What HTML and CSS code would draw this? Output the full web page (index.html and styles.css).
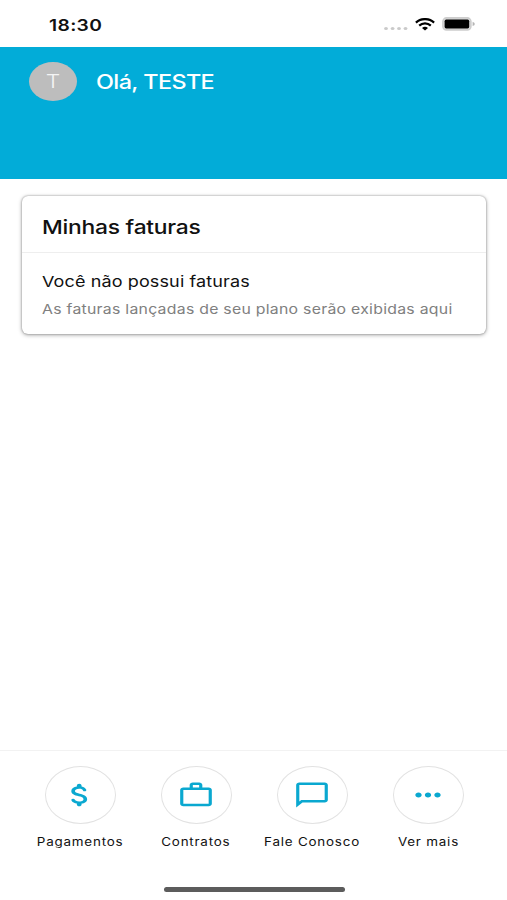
FILE: index.html
```html
<!DOCTYPE html>
<html lang="pt-BR">
<head>

	<meta charset="utf-8">
	<meta name="viewport" content="width=device-width, initial-scale=1">

	<title>Minhas faturas</title>

	<link rel="stylesheet" href="styles.css">

</head>
<body>

	<div class="status">
		<span class="t time">18:30</span>
		<div class="signals">
			<svg class="cell" width="24" height="5" viewBox="0 0 24 5" fill="#cacaca">
				<ellipse cx="2" cy="2.5" rx="1.9" ry="1.6"/>
				<ellipse cx="8.6" cy="2.5" rx="1.9" ry="1.6"/>
				<ellipse cx="15" cy="2.5" rx="1.9" ry="1.6"/>
				<ellipse cx="21.5" cy="2.5" rx="1.9" ry="1.6"/>
			</svg>
			<svg class="wifi" width="20" height="13" viewBox="0 0 20 13" fill="none" stroke="#000" stroke-width="2.2">
				<path d="M.9 4.6C6-.1 14-.1 19.1 4.6"/>
				<path d="M4.2 7.6C7.5 4.6 12.5 4.6 15.8 7.6"/>
				<path d="M7 9.9Q10 7.6 13 9.9L10 12.6z" fill="#000" stroke="none"/>
			</svg>
			<svg class="battery" width="33" height="14" viewBox="0 0 33 14">
				<rect x=".9" y=".9" width="28" height="12" rx="3.6" fill="#ddd" stroke="#cdcdcd" stroke-width="1.6"/>
				<rect x="2.6" y="2.6" width="24.6" height="8.8" rx="1.6" fill="#000"/>
				<path d="M30.6 4.7q2.2 1 2.2 2.2t-2.2 2.2z" fill="#b5b5b5"/>
			</svg>
		</div>
	</div>

	<header class="top">
		<div class="avatar"><span class="t">T</span></div>
		<span class="t hello">Olá, TESTE</span>
	</header>

	<main>
		<section class="card">
			<h2><span class="t">Minhas faturas</span></h2>
			<div class="content">
				<p class="empty"><span class="t">Você não possui faturas</span></p>
				<p class="hint"><span class="t">As faturas lançadas de seu plano serão exibidas aqui</span></p>
			</div>
		</section>
	</main>

	<nav>
		<a class="item">
			<span class="circle">
				<svg viewBox="0 0 24 24" preserveAspectRatio="none"><path d="M11.8 10.9c-2.27-.59-3-1.2-3-2.15 0-1.09 1.01-1.85 2.7-1.85 1.42 0 2.13.54 2.39 1.4.12.4.45.7.87.7h.3c.66 0 1.13-.65.9-1.27-.42-1.18-1.4-2.16-2.96-2.54V4.5c0-.83-.67-1.5-1.5-1.5S10 3.67 10 4.5v.66c-1.94.42-3.5 1.68-3.5 3.61 0 2.31 1.91 3.46 4.7 4.13 2.5.6 3 1.48 3 2.41 0 .69-.49 1.79-2.7 1.79-1.65 0-2.5-.59-2.83-1.43-.15-.39-.49-.67-.9-.67h-.28c-.67 0-1.14.68-.89 1.3.57 1.39 1.9 2.21 3.4 2.53v.67c0 .83.67 1.5 1.5 1.5s1.5-.67 1.5-1.5v-.65c1.95-.37 3.5-1.5 3.5-3.55 0-2.84-2.43-3.81-4.7-4.4z"/></svg>
			</span>
			<span class="t">Pagamentos</span>
		</a>
		<a class="item">
			<span class="circle">
				<svg viewBox="0 0 24 24" preserveAspectRatio="none"><path fill-rule="evenodd" d="M14 6V4h-4v2h4zM4 8v11h16V8H4zm16-2c1.11 0 2 .89 2 2v11c0 1.11-.89 2-2 2H4c-1.11 0-2-.89-2-2V8c0-1.11.89-2 2-2h4V4c0-1.11.89-2 2-2h4c1.11 0 2 .89 2 2v2h4z"/></svg>
			</span>
			<span class="t">Contratos</span>
		</a>
		<a class="item">
			<span class="circle">
				<svg viewBox="0 0 24 24" preserveAspectRatio="none"><path d="M20 2H4c-1.1 0-2 .9-2 2v18l4-4h14c1.1 0 2-.9 2-2V4c0-1.1-.9-2-2-2zm0 14H5.2L4 17.2V4h16v12z"/></svg>
			</span>
			<span class="t">Fale Conosco</span>
		</a>
		<a class="item">
			<span class="circle">
				<svg viewBox="0 0 24 24" preserveAspectRatio="none"><path d="M6 10c-1.1 0-2 .9-2 2s.9 2 2 2 2-.9 2-2-.9-2-2-2zm12 0c-1.1 0-2 .9-2 2s.9 2 2 2 2-.9 2-2-.9-2-2-2zm-6 0c-1.1 0-2 .9-2 2s.9 2 2 2 2-.9 2-2-.9-2-2-2z"/></svg>
			</span>
			<span class="t">Ver mais</span>
		</a>
	</nav>

	<div class="home"></div>

</body>
</html>
```

FILE: styles.css
```css
* {
	margin: 0;
	padding: 0;
	box-sizing: border-box;
}


body {
	display: flex;
	flex-direction: column;
	height: 900px;
	font-family: Inter, "Liberation Sans", sans-serif;
	background: #fff;
	color: #111;
	overflow: hidden;
}

/* wide lettering */
.t {
	display: inline-block;
	white-space: nowrap;
	transform: scaleX(1.2);
	transform-origin: left center;
}


.status {
	display: flex;
	justify-content: space-between;
	height: 47px;
	padding: 0 32px 0 49px;
}

.time {
	font-size: 16px;
	font-weight: 600;
	line-height: 50px;
	letter-spacing: .3px;
}

.signals {
	display: flex;
	align-items: center;
	height: 48px;
}

.cell {
	margin: 9px 7px 0 0;
}

.wifi {
	margin-right: 7px;
}


.top {
	display: flex;
	align-items: flex-start;
	height: 132px;
	padding: 15px 29px;
	background: #02acd8;
	color: #fff;
}

.avatar {
	width: 48px;
	height: 39px;
	margin-right: 19px;
	border-radius: 50%;
	background: #bdbdbd;
	color: #f4f4f4;
	font-size: 19px;
	font-weight: 300;
	line-height: 40px;
	text-align: center;
}

.avatar .t {
	transform-origin: center;
}

.hello {
	font-size: 19.5px;
	font-weight: 500;
	line-height: 40px;
	letter-spacing: -.5px;
}


main {
	flex: 1;
	padding: 17px 21px 0 22px;
}

.card {
	height: 138px;
	border-radius: 6px;
	box-shadow: 0 0 2px rgba(0, 0, 0, .35), 0 1px 4px rgba(0, 0, 0, .35);
}

.card h2 {
	height: 57px;
	padding-left: 20px;
	border-bottom: 1px solid #eee;
	font-size: 19px;
	font-weight: 500;
	line-height: 64px;
	letter-spacing: -.2px;
}

.content {
	padding: 17px 20px;
}

.empty {
	font-size: 15px;
	line-height: 24px;
	letter-spacing: .1px;
}

.hint {
	margin-top: 3px;
	font-size: 13.2px;
	line-height: 24px;
	letter-spacing: .22px;
	color: #808080;
}


nav {
	display: flex;
	height: 137px;
	padding: 15px 21px 0 22px;
	border-top: 1px solid #f2f2f2;
}

.item {
	display: flex;
	flex: 1;
	flex-direction: column;
	align-items: center;
	font-size: 11.2px;
	line-height: 20px;
	letter-spacing: .65px;
}

.item .t {
	margin-top: 8px;
	transform-origin: center;
}

.circle {
	display: flex;
	align-items: center;
	justify-content: center;
	width: 71px;
	height: 58px;
	border: 1px solid #e2e2e2;
	border-radius: 50%;
}

.circle svg {
	width: 38px;
	height: 30px;
	fill: #0aa8d0;
}


.home {
	width: 181px;
	height: 5px;
	margin: 0 auto 8px 164px;
	border-radius: 3px;
	background: #5c5c5c;
}
```
